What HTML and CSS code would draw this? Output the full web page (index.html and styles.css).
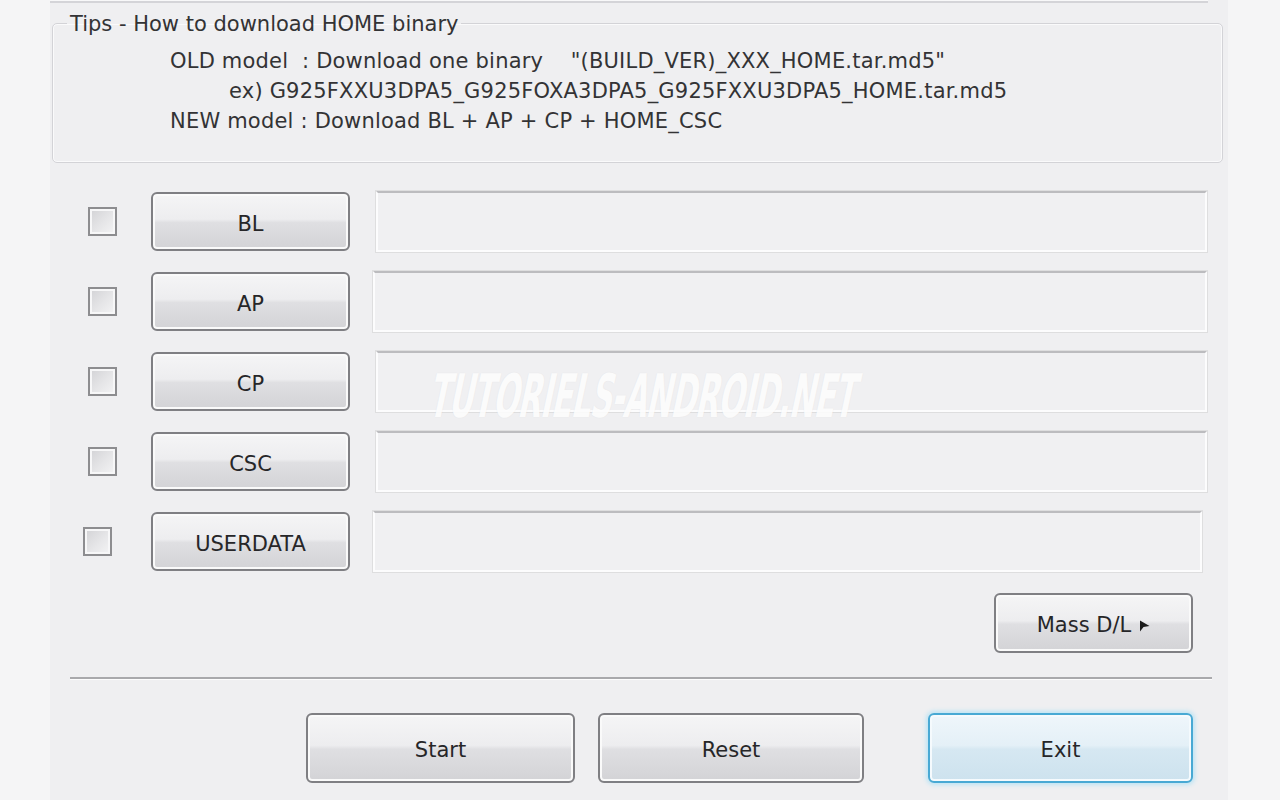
FILE: index.html
```html
<!DOCTYPE html>
<html lang="en">
<head>
  <meta charset="UTF-8" />
  <title>Odin - Download</title>
  <meta name="viewport" content="width=device-width, initial-scale=1.0"/>
  <link rel="stylesheet" href="styles.css">
</head>
<body>
  <div class="window">
    <div class="top-strip"></div>

    <fieldset class="tips">
      <legend>Tips - How to download HOME binary</legend>
      <div class="tip-body">
        <div class="tip-line">OLD model  : Download one binary    "(BUILD_VER)_XXX_HOME.tar.md5"</div>
        <div class="tip-line tip-example">ex) G925FXXU3DPA5_G925FOXA3DPA5_G925FXXU3DPA5_HOME.tar.md5</div>
        <div class="tip-line">NEW model : Download BL + AP + CP + HOME_CSC</div>
      </div>
    </fieldset>

    <!-- binary slots -->
    <div class="file-list">
      <div class="file-row">
        <span class="check"></span>
        <button class="btn file-btn">BL</button>
        <div class="path"></div>
      </div>
      <div class="file-row">
        <span class="check"></span>
        <button class="btn file-btn">AP</button>
        <div class="path path-wide"></div>
      </div>
      <div class="file-row">
        <span class="check"></span>
        <button class="btn file-btn">CP</button>
        <div class="path"></div>
      </div>
      <div class="file-row">
        <span class="check"></span>
        <button class="btn file-btn">CSC</button>
        <div class="path"></div>
      </div>
      <div class="file-row row-userdata">
        <span class="check"></span>
        <button class="btn file-btn">USERDATA</button>
        <div class="path path-wide path-short"></div>
      </div>
    </div>

    <div class="mass-row">
      <button class="btn mass-btn">Mass D/L
        <svg class="mass-arrow" width="11" height="14" viewBox="0 0 11 14">
          <polygon points="1,1.5 10.5,7 4.5,8 1,12.5" fill="#1a1a1a"/>
        </svg>
      </button>
    </div>

    <hr class="divider">

    <div class="actions">
      <button class="btn action-btn btn-start">Start</button>
      <button class="btn action-btn btn-reset">Reset</button>
      <button class="btn action-btn btn-exit">Exit</button>
    </div>

    <div class="watermark">TUTORIELS-ANDROID.NET</div>
  </div>
</body>
</html>
```

FILE: styles.css
```css
body {
  margin: 0;
  background: #f5f5f6;
  font-family: "DejaVu Sans", Tahoma, sans-serif;
  color: #2a2a2c;
}

.window {
  position: relative;
  margin-left: 50px;
  width: 1178px;
  height: 800px;
  background: #efeff1;
  overflow: hidden;
}

.top-strip {
  width: 1158px;
  height: 1px;
  background: #f8f8f9;
  border-bottom: 2px solid #d4d4d8;
}

/* Tips group box */
.tips {
  box-sizing: border-box;
  width: 1171px;
  margin: 7px 0 0 2px;
  padding: 10px 0 26px 0;
  border: 1px solid #d3d3d7;
  border-radius: 5px;
  box-shadow: inset 0 0 0 1px #fafafb;
}

.tips legend {
  margin-left: 14px;
  padding: 2px 3px 0;
  font-size: 21px;
  line-height: 24px;
  color: #333335;
}

.tip-body {
  padding-left: 117px;
}

.tip-line {
  font-size: 21px;
  line-height: 30px;
  letter-spacing: 0.2px;
  white-space: pre;
  color: #333335;
}

.tip-example {
  padding-left: 59px;
}

/* Buttons */
.btn {
  box-sizing: border-box;
  border: 2px solid #7f7f83;
  border-radius: 6px;
  background: linear-gradient(#f5f5f6 0%, #ededef 46%, #dfdfe2 52%, #d3d3d6 100%);
  box-shadow: inset 0 0 0 2px #fafafa;
  font-family: "DejaVu Sans", Tahoma, sans-serif;
  font-size: 21px;
  color: #262628;
  padding: 4px 0 0;
  cursor: pointer;
}

/* File rows */
.file-list {
  display: flex;
  flex-direction: column;
  gap: 19px;
  margin-top: 28px;
  padding: 0 21px 0 38px;
}

.file-row {
  display: flex;
  align-items: center;
  height: 61px;
}

.check {
  box-sizing: border-box;
  width: 29px;
  height: 29px;
  margin-right: 34px;
  border: 2px solid #8d8d90;
  background: linear-gradient(135deg, #d2d2d5 0%, #e6e6e8 55%, #f4f4f5 100%);
  box-shadow: inset 0 0 0 2px #f7f7f8;
}

.row-userdata .check {
  margin-left: -5px;
  margin-right: 39px;
}

.file-btn {
  width: 199px;
  height: 59px;
  margin-right: 26px;
}

.path {
  flex: 1;
  box-sizing: border-box;
  height: 61px;
  background: #f0f0f2;
  border: 2px solid #fcfcfd;
  border-top-color: #bcbcbf;
  box-shadow: 0 0 0 1px #dededf;
}

.path-wide {
  margin-left: -3px;
}

.path-short {
  margin-right: 5px;
}

/* Mass download */
.mass-row {
  display: flex;
  justify-content: flex-end;
  margin-top: 21px;
  padding-right: 35px;
}

.mass-btn {
  width: 199px;
  height: 60px;
  display: flex;
  align-items: center;
  justify-content: center;
  gap: 8px;
}

.mass-arrow {
  margin-top: 1px;
}

.divider {
  height: 0;
  margin: 24px 16px 0 20px;
  border: none;
  border-top: 2px solid #a9a9ac;
  border-bottom: 1px solid #fcfcfd;
}

/* Start / Reset / Exit */
.actions {
  display: flex;
  margin-top: 33px;
  padding-left: 256px;
}

.action-btn {
  height: 70px;
}

.btn-start {
  width: 269px;
}

.btn-reset {
  width: 266px;
  margin-left: 23px;
}

.btn-exit {
  width: 265px;
  margin-left: 64px;
  border-color: #48a9d4;
  background: linear-gradient(#eff6fb 0%, #e4f0f7 46%, #d6e8f2 52%, #cde2ee 100%);
  box-shadow: inset 0 0 0 2px #f5fafd, 0 0 4px 2px #bde4f4;
}

.watermark {
  position: absolute;
  left: 382px;
  top: 364px;
  font-family: "DejaVu Sans Condensed", "DejaVu Sans", sans-serif;
  font-weight: bold;
  font-size: 60px;
  line-height: 64px;
  letter-spacing: -1px;
  color: rgba(255, 255, 255, 0.88);
  text-shadow: 0 0 2px rgba(0, 0, 0, 0.06);
  white-space: nowrap;
  transform: skewX(-12deg) scaleX(0.56);
  transform-origin: left center;
}
```
